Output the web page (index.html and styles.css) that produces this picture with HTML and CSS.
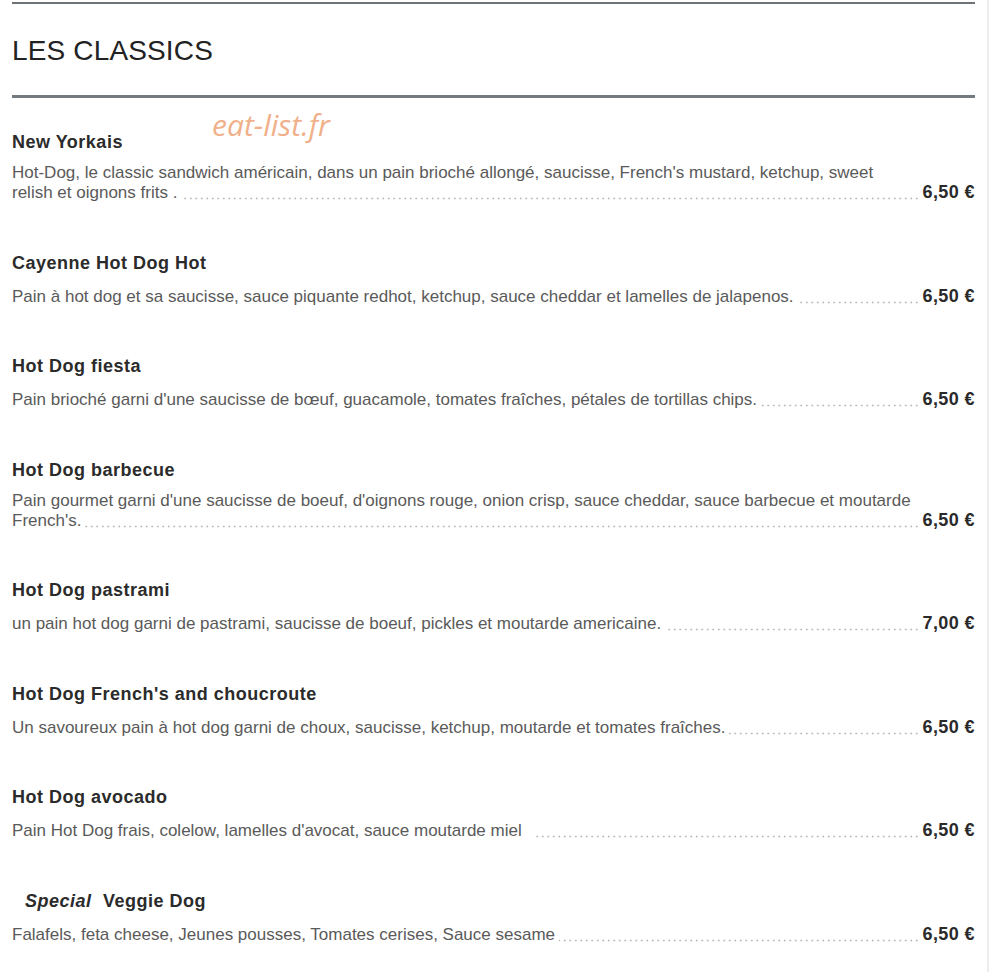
FILE: index.html
```html
<!DOCTYPE html>
<html lang="fr">
<head>
  <meta charset="UTF-8">
  <title>Les Classics</title>
  <link rel="stylesheet" href="styles.css">
</head>
<body>
  <div class="page">
    <div class="menu">
      <h2 class="section-title">LES CLASSICS</h2>
      <span class="watermark">eat-list.fr</span>

      <ul class="items">
        <li class="item">
          <h3 class="item-name">New Yorkais</h3>
          <div class="item-row">
            <p class="item-desc"><span>Hot-Dog, le classic sandwich américain, dans un pain brioché allongé, saucisse, French's mustard, ketchup, sweet relish et oignons frits .</span></p>
            <span class="item-price">6,50 €</span>
          </div>
        </li>
        <li class="item">
          <h3 class="item-name">Cayenne Hot Dog Hot</h3>
          <div class="item-row">
            <p class="item-desc"><span>Pain à hot dog et sa saucisse, sauce piquante redhot, ketchup, sauce cheddar et lamelles de jalapenos.</span></p>
            <span class="item-price">6,50 €</span>
          </div>
        </li>
        <li class="item">
          <h3 class="item-name">Hot Dog fiesta</h3>
          <div class="item-row">
            <p class="item-desc"><span>Pain brioché garni d'une saucisse de bœuf, guacamole, tomates fraîches, pétales de tortillas chips.</span></p>
            <span class="item-price">6,50 €</span>
          </div>
        </li>
        <li class="item">
          <h3 class="item-name">Hot Dog barbecue</h3>
          <div class="item-row">
            <p class="item-desc"><span>Pain gourmet garni d'une saucisse de boeuf, d'oignons rouge, onion crisp, sauce cheddar, sauce barbecue et moutarde French's.</span></p>
            <span class="item-price">6,50 €</span>
          </div>
        </li>
        <li class="item">
          <h3 class="item-name">Hot Dog pastrami</h3>
          <div class="item-row">
            <p class="item-desc"><span>un pain hot dog garni de pastrami, saucisse de boeuf, pickles et moutarde americaine.</span></p>
            <span class="item-price">7,00 €</span>
          </div>
        </li>
        <li class="item">
          <h3 class="item-name">Hot Dog French's and choucroute</h3>
          <div class="item-row">
            <p class="item-desc"><span>Un savoureux pain à hot dog garni de choux, saucisse, ketchup, moutarde et tomates fraîches.</span></p>
            <span class="item-price">6,50 €</span>
          </div>
        </li>
        <li class="item">
          <h3 class="item-name">Hot Dog avocado</h3>
          <div class="item-row">
            <p class="item-desc"><span>Pain Hot Dog frais, colelow, lamelles d'avocat, sauce moutarde miel&nbsp;&nbsp;</span></p>
            <span class="item-price">6,50 €</span>
          </div>
        </li>
        <li class="item">
          <h3 class="item-name"><em class="tag">Special</em> Veggie Dog</h3>
          <div class="item-row">
            <p class="item-desc"><span>Falafels, feta cheese, Jeunes pousses, Tomates cerises, Sauce sesame</span></p>
            <span class="item-price">6,50 €</span>
          </div>
        </li>
      </ul>
    </div>
  </div>
</body>
</html>
```

FILE: styles.css
```css
body {
  margin: 0;
  background: #fff;
  font-family: "Liberation Sans", Arial, sans-serif;
  color: #2a2a2a;
}

.page {
  width: 987px;
  min-height: 972px;
  border-right: 2px solid #ececec;
}

.menu {
  position: relative;
  width: 963px;
  margin-left: 12px;
  padding-top: 2px;
}

.section-title {
  margin: 0;
  padding: 30px 0 27px;
  border-top: 2px solid #6d7377;
  border-bottom: 3px solid #737a80;
  font-size: 28px;
  line-height: 34px;
  font-weight: normal;
  letter-spacing: 0.15px;
  color: #222;
}

.watermark {
  position: absolute;
  left: 200px;
  top: 104px;
  font-family: "Open Sans", sans-serif;
  font-style: italic;
  font-size: 30px;
  color: #f0b08a;
}

.items {
  list-style: none;
  margin: 0;
  padding: 33px 0 0;
}

.item {
  margin-bottom: 46.5px;
}

.item-name {
  margin: 0 0 10px;
  font-size: 18px;
  line-height: 22px;
  font-weight: bold;
  letter-spacing: 0.5px;
  color: #2b2b2b;
}

.tag {
  margin-left: 13px;
  margin-right: 6px;
}

.item-row {
  display: flex;
  align-items: flex-end;
}

.item-desc {
  flex: 1;
  margin: 0;
  padding-bottom: 2px;
  font-size: 17px;
  line-height: 20px;
  color: #5a5a5a;
  background-image: radial-gradient(circle, #b8b8b8 0.8px, transparent 1.2px);
  background-size: 5.5px 3px;
  background-repeat: repeat-x;
  background-position: left bottom 5px;
}

.item-desc span {
  background: #fff;
  padding-right: 4px;
}

.item-price {
  padding-left: 5px;
  font-size: 18px;
  line-height: 25px;
  font-weight: bold;
  letter-spacing: 0.4px;
  color: #2a2a2a;
  white-space: nowrap;
}
```
